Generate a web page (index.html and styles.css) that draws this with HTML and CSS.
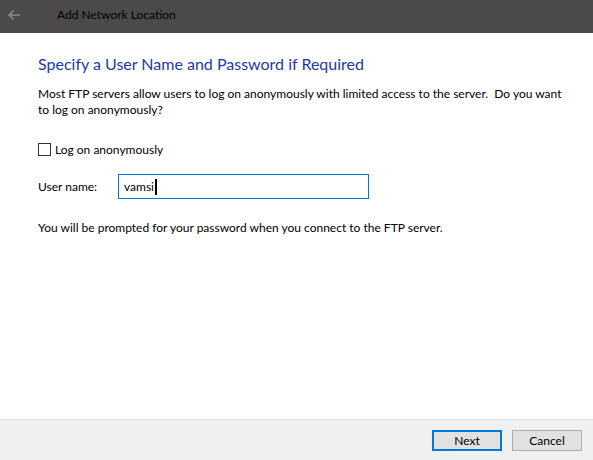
FILE: index.html
```html
<!DOCTYPE html>
<html>
<head>
<meta charset="utf-8">
<link rel="stylesheet" href="styles.css">
</head>
<body>
<div class="window">
  <header class="titlebar">
    <svg class="back" width="14" height="12" viewBox="0 0 14 12">
      <path d="M13 6H2M6.5 1.5L2 6l4.5 4.5" fill="none" stroke="#8c8b89" stroke-width="1.6"/>
    </svg>
    <span class="title">Add Network Location</span>
  </header>
  <main class="content">
    <h1 class="heading">Specify a User Name and Password if Required</h1>
    <p class="text">Most FTP servers allow users to log on anonymously with limited access to the server.&nbsp; Do you want to log on anonymously?</p>
    <label class="check"><span class="box"></span><span>Log on anonymously</span></label>
    <div class="field">
      <span class="label">User name:</span>
      <div class="input"><span>vamsi</span><span class="caret"></span></div>
    </div>
    <p class="text note">You will be prompted for your password when you connect to the FTP server.</p>
  </main>
  <footer class="footer">
    <button class="btn primary">Next</button>
    <button class="btn">Cancel</button>
  </footer>
</div>
</body>
</html>
```
FILE: styles.css
```css
html, body {
  margin: 0;
  padding: 0;
}
body {
  width: 593px;
  height: 460px;
  overflow: hidden;
  font-family: "Lato", "Liberation Sans", sans-serif;
  font-size: 12px;
  color: #000;
  background: #fff;
}
.window {
  display: flex;
  flex-direction: column;
  height: 460px;
}
.titlebar {
  height: 33px;
  background: #4b4a48;
  display: flex;
  align-items: center;
  flex-shrink: 0;
}
.back {
  margin-left: 7px;
  margin-top: -4px;
}
.title {
  margin-left: 36px;
  margin-top: -4px;
  font-size: 12px;
  color: #000;
}
.content {
  flex: 1;
  padding: 0 20px 0 38px;
}
.heading {
  margin: 20px 0 0;
  font-size: 16px;
  font-weight: normal;
  color: #1b3aa3;
  line-height: 22px;
}
.text {
  margin: 11px 0 0;
  line-height: 16px;
}
.check {
  display: flex;
  align-items: center;
  gap: 4px;
  margin-top: 23px;
  height: 16px;
}
.box {
  width: 11px;
  height: 11px;
  border: 1px solid #333;
  background: #fff;
}
.field {
  display: flex;
  align-items: center;
  margin-top: 17px;
}
.label {
  width: 80px;
}
.input {
  width: 244px;
  height: 23px;
  border: 1px solid #0078d7;
  display: flex;
  align-items: center;
  padding-left: 5px;
  box-sizing: content-box;
}
.caret {
  width: 2px;
  height: 16px;
  background: #000;
  margin-left: 1px;
}
.note {
  margin-top: 21px;
}
.footer {
  height: 41px;
  border-top: 1px solid #dfdfdf;
  background: #f0f0f0;
  display: flex;
  justify-content: flex-end;
  align-items: flex-start;
  gap: 10px;
  padding: 10px 11px 0 0;
  box-sizing: border-box;
  flex-shrink: 0;
}
.btn {
  width: 70px;
  height: 21px;
  background: #e1e1e1;
  border: 1px solid #adadad;
  font-family: inherit;
  font-size: 12px;
  color: #000;
  padding: 0;
  line-height: 18px;
}
.btn.primary {
  border: 2px solid #0078d7;
}
```
